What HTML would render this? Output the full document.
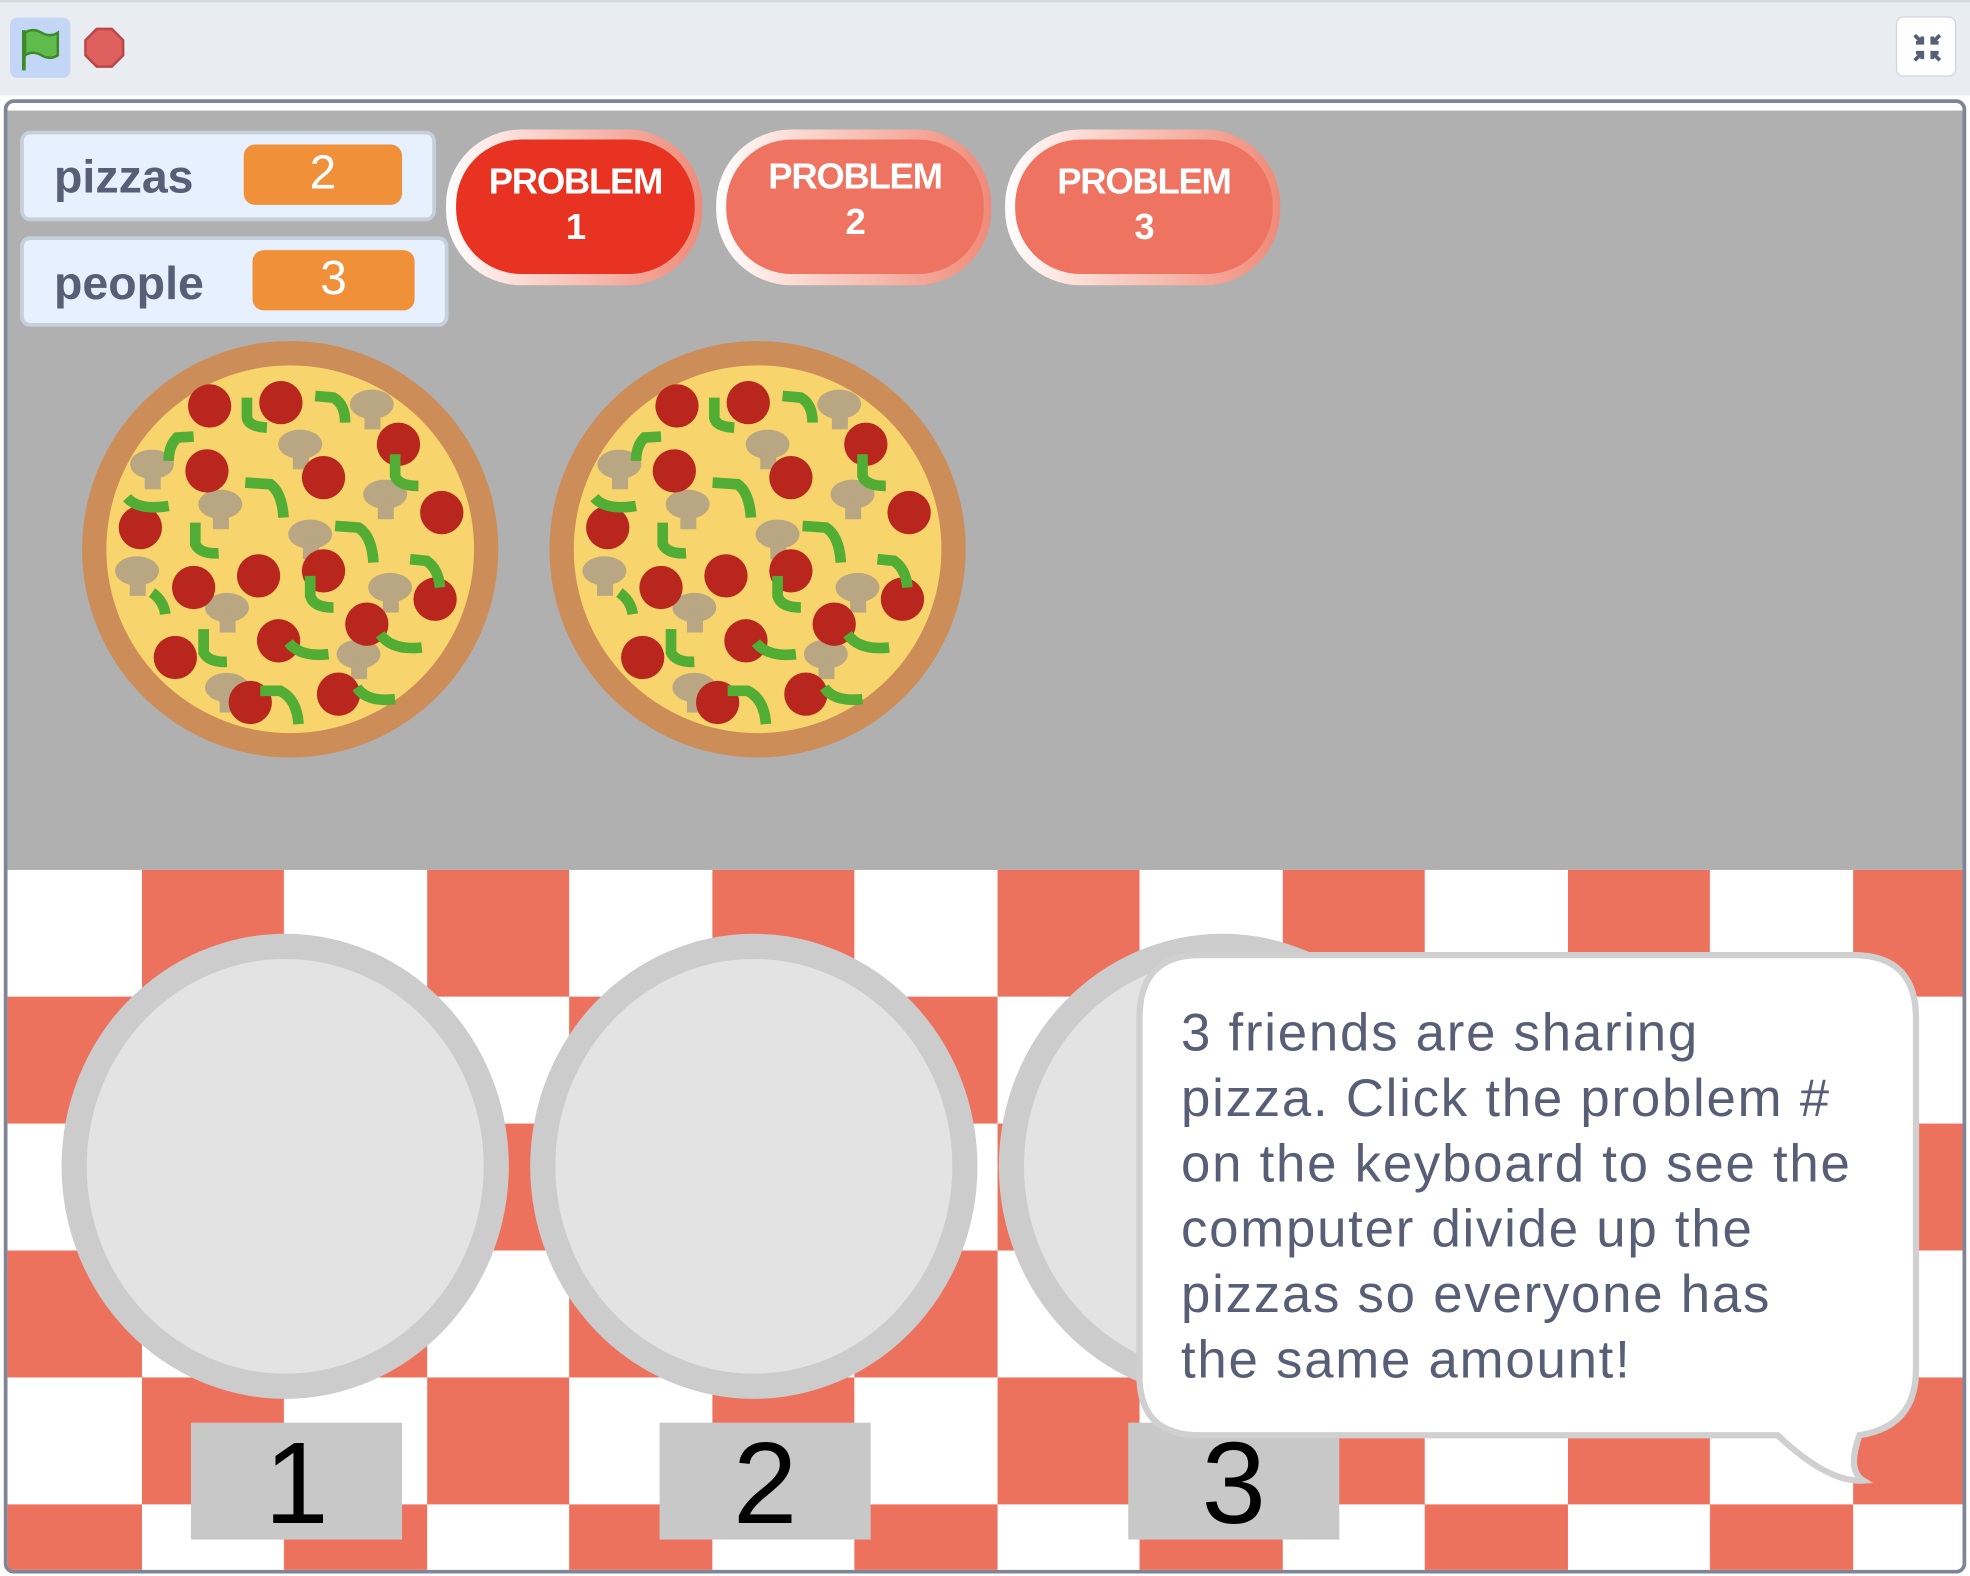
<!DOCTYPE html>
<html><head><meta charset="utf-8"><style>
html,body{margin:0;padding:0;background:#fff;overflow:hidden}
#w{position:absolute;left:0;top:0;width:1568px;height:1254px;transform:scale(1.25638,1.2568);transform-origin:0 0;font-family:"Liberation Sans",sans-serif}
.a{position:absolute}
.mon{position:absolute;background:#e6f0ff;border:3px solid #c6cfdc;border-radius:8px;box-sizing:border-box}
.mon .l{position:absolute;left:24px;font-weight:bold;font-size:37px;color:#575e75}
.mon .v{position:absolute;background:#f0913a;border-radius:9px;color:#fff;font-size:38px;text-align:center}
.btn{position:absolute;border-radius:60px;background:linear-gradient(90deg,#fff 0%,#fbd9d2 30%,#f08a78 100%)}
.btn .in{position:absolute;left:8px;right:6px;top:8px;bottom:9px;border-radius:52px;color:#fff;font-weight:bold;font-size:29px;text-align:center;line-height:36px;padding-top:18px;box-sizing:border-box;letter-spacing:-1px}
.plate{position:absolute;width:356px;height:370px;border-radius:50%;background:#cccccc}
.plate div{position:absolute;left:20px;top:20px;right:20px;bottom:20px;border-radius:50%;background:#e3e3e3}
.num{position:absolute;width:168px;height:93px;background:#c8c8c8;font-size:92px;line-height:98px;text-align:center;color:#000}
</style></head><body><div id="w">
<div class="a" style="left:0;top:0;width:1568px;height:76px;background:#e9edf2;border-top:2px solid #d5dae2;box-sizing:border-box"></div>
<div class="a" style="left:8px;top:14px;width:48px;height:48px;background:#c3d6f5;border-radius:6px"></div>
<svg class="a" style="left:14px;top:20px" width="36" height="40" viewBox="0 0 36 40"><path d="M5 4 L5 36" stroke="#3e8a2a" stroke-width="3"/><path d="M6 6 Q12 2 19 6 Q26 10 32 6 L32 24 Q26 28 19 24 Q12 20 6 24 Z" fill="#5fbc4c" stroke="#3e8a2a" stroke-width="2"/></svg>
<svg class="a" style="left:66px;top:21px" width="34" height="34" viewBox="0 0 34 34"><polygon points="11,2 23,2 32,11 32,23 23,32 11,32 2,23 2,11" fill="#e05f5f" stroke="#b84848" stroke-width="2"/></svg>
<div class="a" style="left:1509px;top:13px;width:48px;height:48px;background:#fff;border:1px solid #d0d5dd;border-radius:6px;box-sizing:border-box"></div>
<svg class="a" style="left:1521px;top:25px" width="26" height="26" viewBox="0 0 26 26" stroke="#575e75" stroke-width="3" fill="none"><path d="M3 3l6 6M9 4v5H4M23 3l-6 6M17 4v5h5M3 23l6-6M9 22v-5H4M23 23l-6-6M17 22v-5h5"/></svg>
<div class="a" style="left:3px;top:79px;width:1562px;height:1173px;border:3px solid #7f8595;border-radius:8px;box-sizing:border-box;overflow:hidden;background:#fff">
<div class="a" style="left:0;top:6px;width:1560px;height:607px;background:#b0b0b0"></div>
<svg class="a" style="left:0;top:610px" width="1560" height="565">
<defs><pattern id="ck" x="-120" y="0" width="227" height="202" patternUnits="userSpaceOnUse"><rect width="227" height="202" fill="#fff"/><rect x="0" y="0" width="113" height="101" fill="#ed725e"/><rect x="113" y="101" width="114" height="101" fill="#ed725e"/></pattern></defs>
<rect width="1560" height="565" fill="url(#ck)"/></svg>
</div>
<div class="mon" style="left:16px;top:104px;width:331px;height:72px"><span class="l" style="top:13px">pizzas</span><div class="v" style="left:175px;top:8px;width:126px;height:48px;line-height:46px">2</div></div>
<div class="mon" style="left:16px;top:188px;width:341px;height:72px"><span class="l" style="top:14px">people</span><div class="v" style="left:182px;top:8px;width:129px;height:48px;line-height:46px">3</div></div>
<div class="btn" style="left:355px;top:103px;width:204px;height:124px"><div class="in" style="background:#e83323;padding-top:16px">PROBLEM<br>1</div></div>
<div class="btn" style="left:570px;top:103px;width:219px;height:124px"><div class="in" style="background:#ee7461;padding-top:12px">PROBLEM<br>2</div></div>
<div class="btn" style="left:800px;top:103px;width:219px;height:124px"><div class="in" style="background:#ee7461;padding-top:16px">PROBLEM<br>3</div></div>
<svg width="0" height="0" style="position:absolute"><defs>
<g id="mu"><ellipse cx="0" cy="-15" rx="66" ry="44"/><rect x="-22" y="0" width="48" height="60"/></g>
<g id="pz">
<circle cx="630" cy="630" r="625" fill="#cd8d59"/>
<circle cx="630" cy="630" r="552" fill="#f8d46c"/>
<g fill="#b9a683">
<use href="#mu" x="875" y="210"/><use href="#mu" x="660" y="330"/><use href="#mu" x="215" y="390"/><use href="#mu" x="420" y="510"/><use href="#mu" x="915" y="480"/><use href="#mu" x="690" y="600"/><use href="#mu" x="170" y="710"/><use href="#mu" x="440" y="820"/><use href="#mu" x="930" y="760"/><use href="#mu" x="835" y="960"/><use href="#mu" x="440" y="1060"/></g>
<g fill="#b9261e">
<circle cx="388" cy="200" r="65"/><circle cx="602" cy="190" r="65"/><circle cx="955" cy="315" r="65"/><circle cx="380" cy="395" r="65"/><circle cx="730" cy="415" r="65"/><circle cx="1085" cy="520" r="65"/><circle cx="180" cy="565" r="65"/><circle cx="535" cy="710" r="65"/><circle cx="730" cy="695" r="65"/><circle cx="340" cy="745" r="65"/><circle cx="1065" cy="780" r="65"/><circle cx="860" cy="855" r="65"/><circle cx="595" cy="905" r="65"/><circle cx="285" cy="955" r="65"/><circle cx="775" cy="1065" r="65"/><circle cx="510" cy="1090" r="65"/></g>
<g fill="none" stroke="#52ad35" stroke-width="32">
<path d="M500 175L500 235Q505 262 560 265"/><path d="M705 170L760 175Q795 195 795 250"/><path d="M340 292L290 295Q265 320 265 365"/><path d="M945 345L945 410Q955 440 1015 440"/><path d="M495 430L570 435Q605 460 610 535"/><path d="M140 475Q175 515 265 500"/><path d="M345 550L345 615Q360 645 415 642"/><path d="M765 560L835 565Q875 590 880 670"/><path d="M990 660L1040 665Q1075 690 1080 745"/><path d="M690 710L690 770Q700 805 760 805"/><path d="M215 760Q250 785 255 825"/><path d="M370 870L370 940Q385 970 440 968"/><path d="M625 910Q660 955 745 945"/><path d="M900 885Q935 935 1025 925"/><path d="M540 1055L600 1055Q650 1080 655 1155"/><path d="M830 1045Q860 1090 945 1080"/></g>
</g></defs></svg>
<svg class="a" style="left:64px;top:270px" width="334" height="334" viewBox="0 0 1260 1260"><use href="#pz"/></svg>
<svg class="a" style="left:436px;top:270px" width="334" height="334" viewBox="0 0 1260 1260"><use href="#pz"/></svg>
<div class="plate" style="left:49px;top:743px"><div></div></div>
<div class="plate" style="left:422px;top:743px"><div></div></div>
<div class="plate" style="left:795px;top:743px"><div></div></div>
<div class="num" style="left:152px;top:1132px">1</div>
<div class="num" style="left:525px;top:1132px">2</div>
<div class="num" style="left:898px;top:1132px">3</div>
<svg class="a" style="left:895px;top:750px" width="640" height="440" viewBox="0 0 640 440">
<path d="M60 10 H580 Q630 10 630 60 V340 Q630 385 585 392 Q575 420 588 428 Q560 430 520 392 H60 Q12 392 12 345 V60 Q12 10 60 10Z" fill="#fff" stroke="#d0d0d0" stroke-width="5"/>
</svg>
<div class="a" style="left:940px;top:796px;font-size:42px;line-height:52px;color:#575e75;white-space:nowrap;letter-spacing:1.4px">3 friends are sharing<br>pizza. Click the problem #<br>on the keyboard to see the<br>computer divide up the<br>pizzas so everyone has<br>the same amount!</div>
</div></body></html>
